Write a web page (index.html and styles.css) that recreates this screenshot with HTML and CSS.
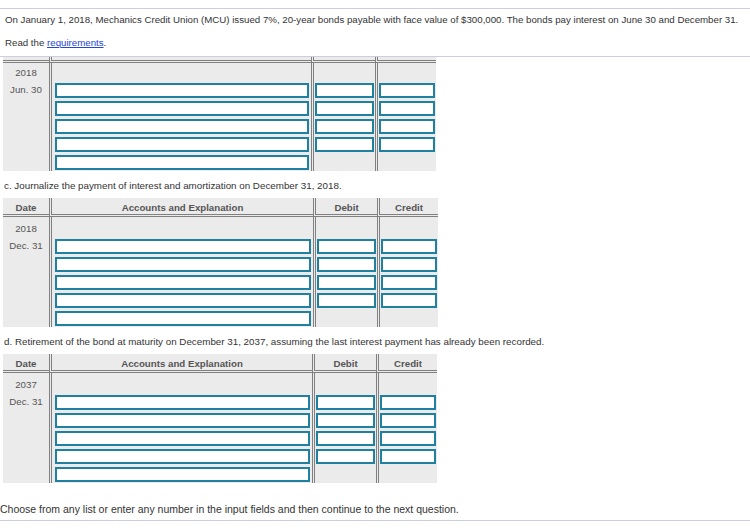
FILE: index.html
```html
<!DOCTYPE html>
<html lang="en">
<head>
<meta charset="utf-8">
<title>Bonds payable journal entries</title>
<link rel="stylesheet" href="styles.css">
</head>
<body>
<div class="page">
  <div class="rule rule-top"></div>
  <div class="question">
    <p class="q-line">On January 1, 2018, Mechanics Credit Union (MCU) issued 7%, 20-year bonds payable with face value of $300,000. The bonds pay interest on June 30 and December 31.</p>
    <p class="q-line q-read">Read the <a href="#" class="link">requirements</a>.</p>
  </div>
  <div class="rule"></div>

  <div class="viewport">
    <div class="journal journal-narrow journal-compact">
      <div class="hcell stub"></div>
      <div class="hcell stub col"></div>
      <div class="hcell stub col"></div>
      <div class="hcell stub col"></div>

      <div class="cell year">2018</div>
      <div class="cell col"></div>
      <div class="cell col"></div>
      <div class="cell col"></div>

      <div class="cell date">Jun. 30</div>
      <div class="cell col acc"><span class="field"></span></div>
      <div class="cell col amt"><span class="field"></span></div>
      <div class="cell col amt"><span class="field"></span></div>

      <div class="cell"></div>
      <div class="cell col acc"><span class="field"></span></div>
      <div class="cell col amt"><span class="field"></span></div>
      <div class="cell col amt"><span class="field"></span></div>

      <div class="cell"></div>
      <div class="cell col acc"><span class="field"></span></div>
      <div class="cell col amt"><span class="field"></span></div>
      <div class="cell col amt"><span class="field"></span></div>

      <div class="cell"></div>
      <div class="cell col acc"><span class="field"></span></div>
      <div class="cell col amt"><span class="field"></span></div>
      <div class="cell col amt"><span class="field"></span></div>

      <div class="cell"></div>
      <div class="cell col acc"><span class="field"></span></div>
      <div class="cell col"></div>
      <div class="cell col"></div>
    </div>

    <p class="part">c. Journalize the payment of interest and amortization on December 31, 2018.</p>
    <div class="journal">
      <div class="hcell">Date</div>
      <div class="hcell col">Accounts and Explanation</div>
      <div class="hcell col">Debit</div>
      <div class="hcell col">Credit</div>

      <div class="cell year">2018</div>
      <div class="cell col"></div>
      <div class="cell col"></div>
      <div class="cell col"></div>

      <div class="cell date">Dec. 31</div>
      <div class="cell col acc"><span class="field"></span></div>
      <div class="cell col amt"><span class="field"></span></div>
      <div class="cell col amt"><span class="field"></span></div>

      <div class="cell"></div>
      <div class="cell col acc"><span class="field"></span></div>
      <div class="cell col amt"><span class="field"></span></div>
      <div class="cell col amt"><span class="field"></span></div>

      <div class="cell"></div>
      <div class="cell col acc"><span class="field"></span></div>
      <div class="cell col amt"><span class="field"></span></div>
      <div class="cell col amt"><span class="field"></span></div>

      <div class="cell"></div>
      <div class="cell col acc"><span class="field"></span></div>
      <div class="cell col amt"><span class="field"></span></div>
      <div class="cell col amt"><span class="field"></span></div>

      <div class="cell"></div>
      <div class="cell col acc"><span class="field"></span></div>
      <div class="cell col"></div>
      <div class="cell col"></div>
    </div>

    <p class="part">d. Retirement of the bond at maturity on December 31, 2037, assuming the last interest payment has already been recorded.</p>
    <div class="journal journal-mid">
      <div class="hcell">Date</div>
      <div class="hcell col">Accounts and Explanation</div>
      <div class="hcell col">Debit</div>
      <div class="hcell col">Credit</div>

      <div class="cell year">2037</div>
      <div class="cell col"></div>
      <div class="cell col"></div>
      <div class="cell col"></div>

      <div class="cell date">Dec. 31</div>
      <div class="cell col acc"><span class="field"></span></div>
      <div class="cell col amt"><span class="field"></span></div>
      <div class="cell col amt"><span class="field"></span></div>

      <div class="cell"></div>
      <div class="cell col acc"><span class="field"></span></div>
      <div class="cell col amt"><span class="field"></span></div>
      <div class="cell col amt"><span class="field"></span></div>

      <div class="cell"></div>
      <div class="cell col acc"><span class="field"></span></div>
      <div class="cell col amt"><span class="field"></span></div>
      <div class="cell col amt"><span class="field"></span></div>

      <div class="cell"></div>
      <div class="cell col acc"><span class="field"></span></div>
      <div class="cell col amt"><span class="field"></span></div>
      <div class="cell col amt"><span class="field"></span></div>

      <div class="cell"></div>
      <div class="cell col acc"><span class="field"></span></div>
      <div class="cell col"></div>
      <div class="cell col"></div>
    </div>
  </div>

  <p class="footer">Choose from any list or enter any number in the input fields and then continue to the next question.</p>
  <div class="rule"></div>
</div>
</body>
</html>
```

FILE: styles.css
```css
html, body {
  margin: 0;
  padding: 0;
  background: #ffffff;
}

.page {
  width: 750px;
  font-family: "Liberation Sans", Arial, sans-serif;
  color: #333333;
}

.rule {
  height: 1px;
  background: #c9cfdc;
}

.rule-top {
  margin-top: 8px;
}

.question {
  padding: 4px 0 6px 5px;
}

.q-line {
  margin: 0;
  font-size: 9.7px;
  line-height: 14px;
  white-space: nowrap;
}

.q-read {
  margin-top: 9px;
}

.link {
  color: #2346d9;
  text-decoration: underline;
}

.viewport {
  height: 440px;
  overflow: hidden;
}

.part {
  margin: 8px 0 6px 4px;
  font-size: 9.8px;
  line-height: 13px;
  white-space: nowrap;
  color: #333333;
}

.journal {
  display: grid;
  grid-template-columns: 46px 264px 64px 61px;
  width: max-content;
  margin-left: 3px;
  background: #ebebeb;
}

.journal-narrow {
  grid-template-columns: 46px 262px 64px 61px;
}

.journal-mid {
  grid-template-columns: 46px 263px 64px 61px;
}

.hcell {
  height: 13px;
  padding-top: 3px;
  line-height: 13px;
  font-size: 9.7px;
  font-weight: bold;
  color: #555555;
  text-align: center;
  border-bottom: 3px double #808080;
  white-space: nowrap;
}

.hcell.stub {
  height: 3px;
  padding-top: 0;
}

.col {
  border-left: 3px double #808080;
}

.cell {
  height: 18px;
  box-sizing: border-box;
  font-size: 9.7px;
  color: #555555;
  text-align: center;
}

.year {
  padding-top: 4px;
  line-height: 16px;
}

.journal > .cell:nth-child(-n+8) {
  height: 20px;
}

.journal-compact > .cell:nth-child(-n+8) {
  height: 18px;
}

.journal-compact > .year {
  padding-top: 2px;
}

.date {
  line-height: 18px;
}

.acc {
  padding: 2px 2px 1px 3px;
}

.amt {
  padding: 2px 1px 1px 1px;
}

.field {
  display: block;
  height: 15px;
  box-sizing: border-box;
  background: #ffffff;
  border: 2px solid #1f80a0;
}

.footer {
  margin: 5px 0 4px 0;
  font-size: 10.5px;
  line-height: 14px;
  white-space: nowrap;
  color: #333333;
}
```
